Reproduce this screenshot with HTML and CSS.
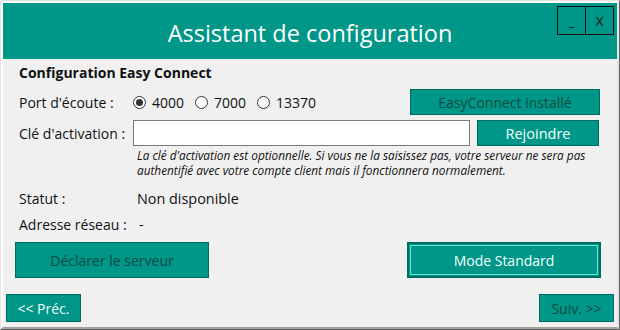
FILE: index.html
```html
<!DOCTYPE html>
<html lang="fr">
<head>
<meta charset="utf-8">
<title>Assistant de configuration</title>
<link rel="stylesheet" href="styles.css">
</head>
<body>
<div class="window">
  <div class="frame">
    <header class="titlebar">
      <h1 class="title">Assistant de configuration</h1>
      <div class="winctl">
        <button class="ctl">_</button>
        <button class="ctl">X</button>
      </div>
    </header>
    <main class="content">
      <h2 class="section">Configuration Easy Connect</h2>
      <div class="row row-port">
        <span class="label">Port d'écoute :</span>
        <div class="radios">
          <span class="radio checked"></span><span class="rtext">4000</span>
          <span class="radio"></span><span class="rtext">7000</span>
          <span class="radio"></span><span class="rtext">13370</span>
        </div>
        <button class="btn btn-dark btn-install">EasyConnect installé</button>
      </div>
      <div class="row row-key">
        <span class="label">Clé d'activation :</span>
        <div class="input"></div>
        <button class="btn btn-light btn-join">Rejoindre</button>
      </div>
      <p class="note">La clé d'activation est optionnelle. Si vous ne la saisissez pas, votre serveur ne sera pas<br>authentifié avec votre compte client mais il fonctionnera normalement.</p>
      <div class="row row-info row-status">
        <span class="label">Statut :</span>
        <span class="value">Non disponible</span>
      </div>
      <div class="row row-info row-addr">
        <span class="label">Adresse réseau :</span>
        <span class="value value-dash">-</span>
      </div>
      <div class="actions">
        <button class="btn btn-dark btn-big">Déclarer le serveur</button>
        <button class="btn btn-light btn-big btn-focus">Mode Standard</button>
      </div>
      <div class="nav">
        <button class="btn btn-light btn-nav">&lt;&lt; Préc.</button>
        <button class="btn btn-dark btn-nav">Suiv. &gt;&gt;</button>
      </div>
    </main>
  </div>
</div>
</body>
</html>
```
FILE: styles.css
```css
* { box-sizing: border-box; }
html, body { margin: 0; padding: 0; }
body {
  width: 620px;
  height: 330px;
  overflow: hidden;
  background: #f0f0f0;
  font-family: "Open Sans", "Noto Sans", sans-serif;
  color: #111;
}
.window {
  width: 620px;
  height: 330px;
  border-top: 1px solid #e3e3e3;
  border-left: 1px solid #e3e3e3;
  border-right: 1px solid #646464;
  border-bottom: 1px solid #646464;
}
.frame {
  height: 100%;
  border-top: 2px solid #ffffff;
  border-left: 2px solid #ffffff;
  border-right: 2px solid #e3e3e3;
  border-bottom: 2px solid #a0a0a0;
  background: #f0f0f0;
  display: flex;
  flex-direction: column;
}
.titlebar {
  position: relative;
  height: 56px;
  background: #009688;
  display: flex;
  align-items: center;
  justify-content: center;
}
.title {
  margin: 0;
  font-size: 23.5px;
  font-weight: 400;
  color: #ffffff;
  padding-top: 3px;
}
.winctl {
  position: absolute;
  top: 3px;
  right: 3px;
  display: flex;
}
.ctl {
  width: 29px;
  height: 29px;
  margin-left: -1px;
  background: transparent;
  border: 1px solid #111;
  font-family: "Open Sans", sans-serif;
  font-size: 13px;
  color: #111;
  padding: 0;
}
.content {
  flex: 1;
  display: flex;
  flex-direction: column;
  padding: 0 16px 0 16px;
  font-size: 14px;
}
.section {
  margin: 4px 0 0 0;
  font-size: 14px;
  font-weight: 700;
  line-height: 20px;
  height: 22px;
}
.row {
  display: flex;
  align-items: center;
}
.label {
  width: 114px;
  flex: none;
  font-size: 14px;
}
.row-port {
  height: 26px;
  margin-top: 4px;
}
.radios {
  flex: 1;
  display: flex;
  align-items: center;
}
.radio {
  width: 13px;
  height: 13px;
  border-radius: 50%;
  border: 1px solid #333;
  background: #fff;
  position: relative;
  flex: none;
}
.radio.checked::after {
  content: "";
  position: absolute;
  left: 2px;
  top: 2px;
  width: 7px;
  height: 7px;
  border-radius: 50%;
  background: #333;
}
.rtext {
  margin-left: 6px;
  margin-right: 11px;
}
.btn {
  background: #009688;
  border: 1px solid #006a5c;
  font-family: "Open Sans", "Noto Sans", sans-serif;
  font-size: 14px;
  padding: 0;
}
.btn-dark { color: #0e4a42; }
.btn-light { color: #f4fffc; }
.btn-install {
  width: 190px;
  height: 26px;
  margin-right: 1px;
}
.row-key {
  height: 26px;
  margin-top: 5px;
}
.input {
  width: 337px;
  height: 26px;
  background: #fff;
  border: 1px solid #7a7a7a;
}
.btn-join {
  width: 122px;
  height: 26px;
  margin-left: 7px;
  font-size: 14.5px;
}
.note {
  margin: 2px 0 0 118px;
  font-size: 11.8px;
  font-style: italic;
  line-height: 15px;
  color: #111;
}
.row-info {
  height: 24px;
  font-size: 14.4px;
}
.value { margin-left: 4px; }
.row-status { margin-top: 8px; }
.row-addr { margin-top: 2px; }
.value-dash { margin-left: 6px; }
.actions {
  display: flex;
  justify-content: space-between;
  margin: 6px -16px 0 -4px;
  padding-right: 16px;
}
.btn-big {
  width: 194px;
  height: 36px;
  font-size: 14px;
}
.btn-focus {
  border: 2px solid #006a5c;
  box-shadow: inset 0 0 0 1px #009688, inset 0 0 0 2px #5ee6d6;
}
.nav {
  display: flex;
  justify-content: space-between;
  margin: 16px -13px 0 -13px;
}
.btn-nav {
  width: 75px;
  height: 28px;
  font-size: 14px;
}
```
